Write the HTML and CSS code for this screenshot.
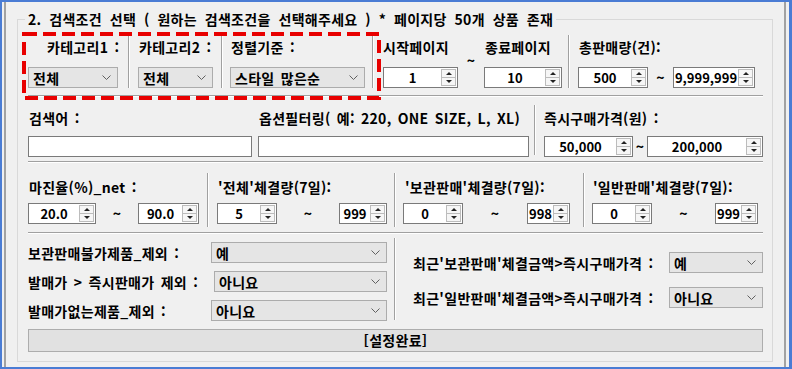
FILE: index.html
```html
<!doctype html>
<html lang="ko">
<head>
	<meta charset="UTF-8" />
	<title>검색조건 선택</title>
	<link rel="stylesheet" href="styles.css">
</head>
<body>
	<div class="window">
		<div class="frame">
			<div class="group">
				<div class="title">2. 검색조건 선택 ( 원하는 검색조건을 선택해주세요 ) * 페이지당 50개 상품 존재</div>

				<!--빨간 점선 표시-->
				<svg class="mark" width="359" height="68" viewBox="0 0 359 68">
					<rect x="2" y="2" width="355" height="64" fill="none" stroke="#e80000" stroke-width="4" stroke-dasharray="13 6" />
				</svg>

				<!--1줄: 카테고리 / 페이지 / 판매량-->
				<div class="row r1">
					<div class="col w100">
						<div class="lbl pl19">카테고리1 :</div>
						<div class="ctl">
							<div class="combo w90"><span>전체</span><svg class="chev" width="9" height="5" viewBox="0 0 9 5"><path d="M0.5 0.5L4.5 4.5L8.5 0.5" /></svg></div>
						</div>
					</div>
					<div class="vsep"></div>
					<div class="col w91 p8">
						<div class="lbl ml1">카테고리2 :</div>
						<div class="ctl">
							<div class="combo w75"><span>전체</span><svg class="chev" width="9" height="5" viewBox="0 0 9 5"><path d="M0.5 0.5L4.5 4.5L8.5 0.5" /></svg></div>
						</div>
					</div>
					<div class="vsep"></div>
					<div class="col w149 p7">
						<div class="lbl ml1">정렬기준 :</div>
						<div class="ctl">
							<div class="combo w135"><span>스타일 많은순</span><svg class="chev" width="9" height="5" viewBox="0 0 9 5"><path d="M0.5 0.5L4.5 4.5L8.5 0.5" /></svg></div>
						</div>
					</div>
					<div class="vsep"></div>
					<div class="col pair w194 p9">
						<div class="col w75">
							<div class="lbl">시작페이지</div>
							<div class="ctl">
								<div class="spin w75"><span class="num">1</span><span class="ud"><i class="up"></i><i class="dn"></i></span></div>
							</div>
						</div>
						<div class="tilde-up w26">~</div>
						<div class="col w78">
							<div class="lbl ml1">종료페이지</div>
							<div class="ctl">
								<div class="spin w78"><span class="num">10</span><span class="ud"><i class="up"></i><i class="dn"></i></span></div>
							</div>
						</div>
					</div>
					<div class="vsep"></div>
					<div class="col w193 p8">
						<div class="lbl ml1">총판매량(건):</div>
						<div class="ctl">
							<div class="spin w70"><span class="num">500</span><span class="ud"><i class="up"></i><i class="dn"></i></span></div>
							<div class="tl w25">~</div>
							<div class="spin w82"><span class="num">9,999,999</span><span class="ud"><i class="up"></i><i class="dn"></i></span></div>
						</div>
					</div>
				</div>
				<div class="hsep"></div>

				<!--2줄: 검색어 / 옵션 / 즉시구매가격-->
				<div class="row r2">
					<div class="col pair w506">
						<div class="col w224 mr6">
							<div class="lbl ml1">검색어 :</div>
							<div class="ctl"><div class="tbox w224"></div></div>
						</div>
						<div class="col w271">
							<div class="lbl ml1">옵션필터링( 예: 220, ONE SIZE, L, XL)</div>
							<div class="ctl"><div class="tbox w271"></div></div>
						</div>
					</div>
					<div class="vsep"></div>
					<div class="col w227 p8">
						<div class="lbl">즉시구매가격(원) :</div>
						<div class="ctl">
							<div class="spin w89"><span class="num">50,000</span><span class="ud"><i class="up"></i><i class="dn"></i></span></div>
							<div class="tl w14">~</div>
							<div class="spin w116"><span class="num">200,000</span><span class="ud"><i class="up"></i><i class="dn"></i></span></div>
						</div>
					</div>
				</div>
				<div class="hsep"></div>

				<!--3줄: 마진율 / 체결량-->
				<div class="row r3">
					<div class="col w179">
						<div class="lbl ml1">마진율(%)_net :</div>
						<div class="ctl">
							<div class="spin w68"><span class="num">20.0</span><span class="ud"><i class="up"></i><i class="dn"></i></span></div>
							<div class="tl w42">~</div>
							<div class="spin w61"><span class="num">90.0</span><span class="ud"><i class="up"></i><i class="dn"></i></span></div>
						</div>
					</div>
					<div class="vsep"></div>
					<div class="col w185 p8">
						<div class="lbl ml1">'전체'체결량(7일):</div>
						<div class="ctl">
							<div class="spin w60"><span class="num">5</span><span class="ud"><i class="up"></i><i class="dn"></i></span></div>
							<div class="tl w62">~</div>
							<div class="spin w48"><span class="num">999</span><span class="ud"><i class="up"></i><i class="dn"></i></span></div>
						</div>
					</div>
					<div class="vsep"></div>
					<div class="col w187 p7">
						<div class="lbl ml2">'보관판매'체결량(7일):</div>
						<div class="ctl">
							<div class="spin w60"><span class="num">0</span><span class="ud"><i class="up"></i><i class="dn"></i></span></div>
							<div class="tl w64">~</div>
							<div class="spin w43"><span class="num">998</span><span class="ud"><i class="up"></i><i class="dn"></i></span></div>
						</div>
					</div>
					<div class="vsep"></div>
					<div class="col w178 p7">
						<div class="lbl ml1">'일반판매'체결량(7일):</div>
						<div class="ctl">
							<div class="spin w60"><span class="num">0</span><span class="ud"><i class="up"></i><i class="dn"></i></span></div>
							<div class="tl w63">~</div>
							<div class="spin w43"><span class="num">999</span><span class="ud"><i class="up"></i><i class="dn"></i></span></div>
						</div>
					</div>
				</div>
				<div class="hsep"></div>

				<!--4줄: 제외 옵션-->
				<div class="row r4">
					<div class="col opts-l w366">
						<div class="opt"><span class="lbl w183">보관판매불가제품_제외 :</span><div class="combo w176"><span>예</span><svg class="chev" width="9" height="5" viewBox="0 0 9 5"><path d="M0.5 0.5L4.5 4.5L8.5 0.5" /></svg></div></div>
						<div class="opt"><span class="lbl w186">발매가 &gt; 즉시판매가 제외 :</span><div class="combo w173"><span>아니요</span><svg class="chev" width="9" height="5" viewBox="0 0 9 5"><path d="M0.5 0.5L4.5 4.5L8.5 0.5" /></svg></div></div>
						<div class="opt"><span class="lbl w183">발매가없는제품_제외 :</span><div class="combo w176"><span>아니요</span><svg class="chev" width="9" height="5" viewBox="0 0 9 5"><path d="M0.5 0.5L4.5 4.5L8.5 0.5" /></svg></div></div>
					</div>
					<div class="vsep"></div>
					<div class="col opts-r w367">
						<div class="opt"><span class="lbl w256">최근'보관판매'체결금액&gt;즉시구매가격 :</span><div class="combo w94"><span>예</span><svg class="chev" width="9" height="5" viewBox="0 0 9 5"><path d="M0.5 0.5L4.5 4.5L8.5 0.5" /></svg></div></div>
						<div class="opt"><span class="lbl w256">최근'일반판매'체결금액&gt;즉시구매가격 :</span><div class="combo w94"><span>아니요</span><svg class="chev" width="9" height="5" viewBox="0 0 9 5"><path d="M0.5 0.5L4.5 4.5L8.5 0.5" /></svg></div></div>
					</div>
				</div>

				<div class="btn">[설정완료]</div>
			</div>
		</div>
	</div>
</body>
</html>
```

FILE: styles.css
```css
*{
	padding: 0;
	margin: 0;
}
body{
	background: #f0f0f0;
	color: #000;
	font: bold 14px "Noto Sans CJK KR", sans-serif;
	letter-spacing: 0.3px;
	word-spacing: 2px;
}

/*창 테두리*/
.window{
	width: 792px;
	height: 369px;
	box-sizing: border-box;
	border-style: solid;
	border-color: #4a7cd4;
	border-width: 2px 3px 2px 2px;
	display: flex;
}
.frame{
	flex: 1;
	margin: 0 3px 0 2px;
	border-left: 2px solid #a2a2a2;
	border-right: 2px solid #a2a2a2;
}

/*그룹박스*/
.group{
	position: relative;
	margin: 17px 11px 0 11px;
	height: 343px;
	box-sizing: border-box;
	border: 1px solid #d9d9d9;
	padding: 0 9px 0 10px;
}
.title{
	width: fit-content;
	margin: -9px 0 0 -3px;
	padding: 0 3px;
	line-height: 16px;
	background: #f0f0f0;
	white-space: nowrap;
	word-spacing: 3.6px;
}
.mark{
	position: absolute;
	left: 4px;
	top: 12px;
}

/*줄*/
.row{
	display: flex;
}
.r1{
	margin-top: 8px;
	height: 60px;
}
.r2{
	height: 64px;
}
.r3{
	height: 69px;
}
.r4{
	height: 87px;
}
.hsep{
	border-top: 1px solid #a0a0a0;
	border-bottom: 1px solid #fff;
}
.vsep{
	border-left: 1px solid #a0a0a0;
	border-right: 1px solid #fff;
}
.r1 .vsep{
	height: 53px;
}
.r2 .vsep{
	margin-top: 8px;
	height: 50px;
}
.r3 .vsep{
	margin-top: 10px;
	height: 54px;
}
.r4 .vsep{
	margin-top: 4px;
	height: 82px;
}

.col{
	display: flex;
	flex-direction: column;
	box-sizing: border-box;
	flex: none;
}
.col.pair{
	flex-direction: row;
}
.lbl{
	line-height: 16px;
	white-space: nowrap;
}
.ctl{
	display: flex;
	align-items: center;
}
.r1 .lbl{ margin-top: 4px; }
.r1 .ctl{ margin-top: 12px; }
.r2 .lbl{ margin-top: 13px; }
.r2 .ctl{ margin-top: 10px; }
.r3 .lbl{ margin-top: 16px; }
.r3 .ctl{ margin-top: 8px; }

.tl{
	text-align: center;
	line-height: 21px;
	flex: none;
}
.tilde-up{
	text-align: center;
	margin-top: 17px;
	line-height: 16px;
	flex: none;
}

/*4줄 옵션*/
.opt{
	display: flex;
	align-items: center;
	height: 21px;
}
.opt .lbl{
	flex: none;
}
.opts-l{
	padding-top: 8px;
	gap: 8px;
}
.opts-r{
	padding-left: 17px;
	padding-top: 18px;
	gap: 14px;
}

/*콤보박스*/
.combo{
	box-sizing: border-box;
	height: 21px;
	display: flex;
	align-items: center;
	justify-content: space-between;
	border: 1px solid #acacac;
	background: #e5e5e5;
	padding: 0 6px 0 4px;
	flex: none;
	white-space: nowrap;
}
.chev path{
	fill: none;
	stroke: #606060;
	stroke-width: 1;
}

/*숫자 입력*/
.spin{
	box-sizing: border-box;
	height: 21px;
	display: flex;
	border: 1px solid #7a7a7a;
	background: #fff;
	flex: none;
}
.num{
	flex: 1;
	text-align: center;
	line-height: 19px;
	white-space: nowrap;
	overflow: hidden;
	font-size: 13px;
	letter-spacing: 0;
}
.ud{
	width: 15px;
	box-sizing: border-box;
	margin: 1px 1px 1px 0;
	border: 1px solid #bcbcbc;
	background: #f6f6f6;
	display: flex;
	flex-direction: column;
	flex: none;
}
.ud i{
	flex: 1;
	display: flex;
	align-items: center;
	justify-content: center;
}
.ud i + i{
	border-top: 1px solid #bcbcbc;
}
.ud i::before{
	content: "";
	border-left: 3px solid transparent;
	border-right: 3px solid transparent;
}
.ud .up::before{
	border-bottom: 3px solid #222;
}
.ud .dn::before{
	border-top: 3px solid #222;
}

/*텍스트박스*/
.tbox{
	box-sizing: border-box;
	height: 21px;
	border: 1px solid #7a7a7a;
	background: #fff;
}

/*버튼*/
.btn{
	margin-top: 8px;
	height: 23px;
	box-sizing: border-box;
	border: 1px solid #adadad;
	background: #e1e1e1;
	text-align: center;
	line-height: 21px;
}

/*간격*/
.p7{ padding-left: 7px; }
.p8{ padding-left: 8px; }
.p9{ padding-left: 9px; }
.pl19{ padding-left: 19px; }
.ml1{ margin-left: 1px; }
.ml2{ margin-left: 2px; }
.mr6{ margin-right: 6px; }

/*너비*/
.w14{ width: 14px; }
.w25{ width: 25px; }
.w26{ width: 26px; }
.w42{ width: 42px; }
.w43{ width: 43px; }
.w48{ width: 48px; }
.w60{ width: 60px; }
.w61{ width: 61px; }
.w62{ width: 62px; }
.w63{ width: 63px; }
.w64{ width: 64px; }
.w68{ width: 68px; }
.w70{ width: 70px; }
.w75{ width: 75px; }
.w78{ width: 78px; }
.w82{ width: 82px; }
.w89{ width: 89px; }
.w90{ width: 90px; }
.w91{ width: 91px; }
.w94{ width: 94px; }
.w100{ width: 100px; }
.w116{ width: 116px; }
.w135{ width: 135px; }
.w149{ width: 149px; }
.w173{ width: 173px; }
.w176{ width: 176px; }
.w178{ width: 178px; }
.w179{ width: 179px; }
.w183{ width: 183px; }
.w185{ width: 185px; }
.w186{ width: 186px; }
.w187{ width: 187px; }
.w193{ width: 193px; }
.w194{ width: 194px; }
.w224{ width: 224px; }
.w227{ width: 227px; }
.w256{ width: 256px; }
.w271{ width: 271px; }
.w366{ width: 366px; }
.w367{ width: 367px; }
.w506{ width: 506px; }
```
